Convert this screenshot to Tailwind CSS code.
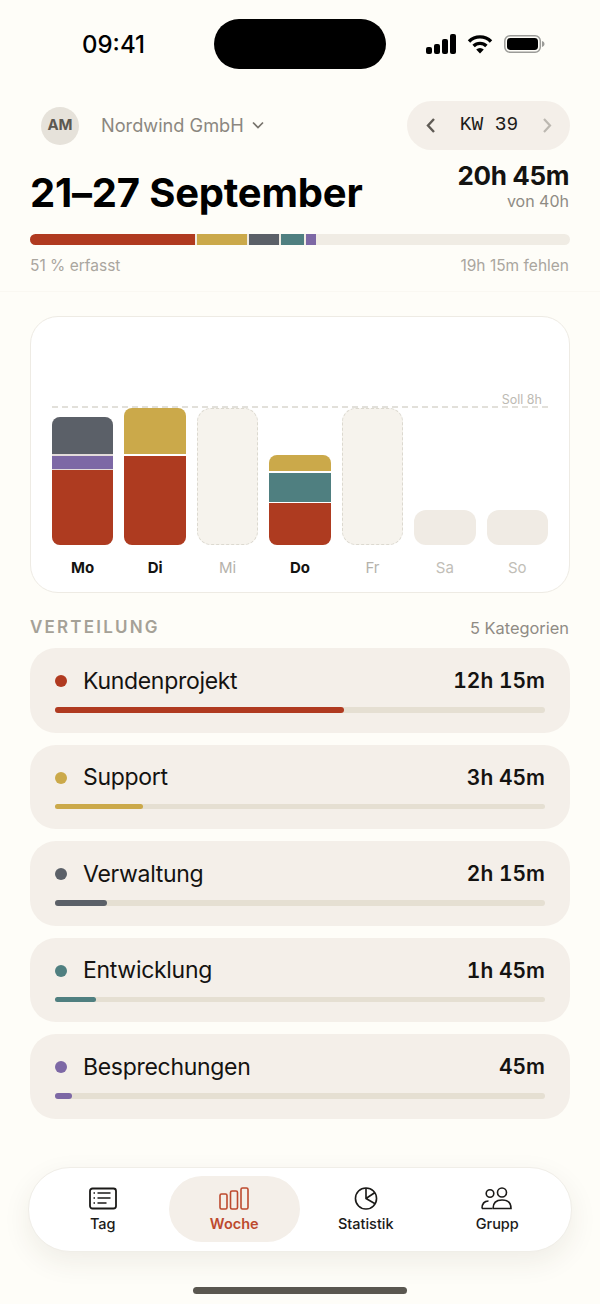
<!DOCTYPE html>
<html lang="de">
<head>
    <meta charset="UTF-8">
    <meta name="viewport" content="width=device-width, initial-scale=1.0">
    <title>Woche</title>
    <script src="https://cdn.jsdelivr.net/npm/@tailwindcss/browser@4"></script>
</head>
<body class="bg-[#fefdf8] font-['Inter',sans-serif] text-[#141311]">
    <div class="w-[600px] h-[1304px] overflow-hidden flex flex-col">
        <!-- Statusleiste -->
        <div class="h-[69px] mt-[19px] pl-[82px] pr-[55px] flex items-start shrink-0">
            <span class="w-[64px] mt-[13px] text-[24px] leading-[25px] font-medium text-black whitespace-nowrap">09:41</span>
            <div class="w-[172px] h-[50px] ml-[68px] rounded-full bg-black"></div>
            <div class="flex items-center gap-[10px] ml-auto mt-[15px]">
                <svg width="31" height="20" viewBox="0 0 31 20" fill="#000"><rect x="0" y="13" width="6" height="7" rx="2"/><rect x="8" y="10" width="6" height="10" rx="2"/><rect x="16" y="5" width="6" height="15" rx="2"/><rect x="24" y="0" width="6" height="20" rx="2"/></svg>
                <svg width="26" height="20" viewBox="0 0 26 20" fill="none" stroke="#000" stroke-width="3.4"><path d="M2 7.5a15.5 15.5 0 0 1 22 0"/><path d="M6.6 12a9 9 0 0 1 12.8 0"/><path d="M13 19.5l-3.8-4a5.3 5.3 0 0 1 7.6 0z" fill="#000" stroke="none"/></svg>
                <svg width="41" height="20" viewBox="0 0 41 20" fill="none" class="ml-[1px]"><rect x="0.8" y="1.8" width="35.5" height="16.5" rx="5.2" stroke="#9b9b98" stroke-width="1.5"/><rect x="3" y="4" width="31" height="12" rx="3.4" fill="#000"/><path d="M38 7v6c1.5-.4 2.5-1.600 2.500-3S39.500 7.400 38 7z" fill="#9b9b98"/></svg>
            </div>
        </div>

        <!-- Kopfbereich -->
        <div class="px-[30px] pt-[13px] h-[204px] border-b border-[#faf8f2] shrink-0">
            <div class="flex items-center justify-between">
                <div class="flex items-center ml-[11px]">
                    <div class="w-[38px] h-[38px] rounded-full bg-[#e6e2da] flex items-center justify-center text-[15px] font-bold text-[#5c5850]">AM</div>
                    <span class="ml-[22px] text-[18.200px] text-[#8b8780]">Nordwind GmbH</span>
                    <svg width="14" height="9" viewBox="0 0 14 9" fill="none" stroke="#77736c" stroke-width="1.700" class="ml-[7px]"><path d="M2 1.500l5 5 5-5"/></svg>
                </div>
                <div class="w-[163px] h-[49px] rounded-full bg-[#f4efe9] flex items-center justify-between pl-[18px] pr-[17px]">
                    <svg width="11" height="17" viewBox="0 0 11 17" fill="none" stroke="#5f5b55" stroke-width="2.400"><path d="M9 2L3 8.500 9 15"/></svg>
                    <span class="font-['Liberation_Mono',monospace] text-[19.500px] text-[#1d1c1a] whitespace-pre">KW 39</span>
                    <svg width="11" height="17" viewBox="0 0 11 17" fill="none" stroke="#bcb8b1" stroke-width="2.200"><path d="M2 2l6 6.500L2 15"/></svg>
                </div>
            </div>
            <div class="flex justify-between mt-[10px] h-[52px] pr-[1px]">
                <h1 class="text-[40px] leading-[46px] mt-[10px] font-bold tracking-[-0.2px] text-black whitespace-nowrap">21–27 September</h1>
                <div class="text-right">
                    <div class="text-[26px] leading-[32px] font-bold tracking-[-0.4px]">20h 45m</div>
                    <div class="text-[16px] leading-[18px] text-[#8f8b84]">von 40h</div>
                </div>
            </div>
            <div class="mt-[22px] h-[11px] rounded-full bg-[#f0ece4] overflow-hidden flex gap-[2px]">
                <div class="w-[165px] bg-[#b03a20]"></div>
                <div class="w-[50px] bg-[#cba94a]"></div>
                <div class="w-[30px] bg-[#5b6068]"></div>
                <div class="w-[23px] bg-[#4f7f80]"></div>
                <div class="w-[10px] bg-[#7d68a5]"></div>
            </div>
            <div class="flex justify-between mt-[12px] pr-[1px] text-[15.500px] leading-[18px] text-[#aaa69f]">
                <span>51 % erfasst</span>
                <span>19h 15m fehlen</span>
            </div>
        </div>

        <!-- Wochendiagramm -->
        <div class="mx-[30px] mt-[24px] h-[277px] rounded-[28px] bg-white border border-[#eeebe4] px-[21px] shrink-0 relative">
            <svg class="absolute left-[21px] top-[89px]" width="496" height="2"><line x1="0" y1="1" x2="496" y2="1" stroke="#d9d6ce" stroke-width="1.500" stroke-dasharray="6 4"/></svg>
            <span class="absolute right-[27px] top-[75px] text-[12.500px] leading-[15px] text-[#bdbab3]">Soll 8h</span>
            <div class="grid grid-cols-7 gap-[11px] h-[228px] items-end">
                <div class="h-[128px] rounded-[8px] overflow-hidden flex flex-col gap-[1.500px] bg-[#e3dcda]">
                    <div class="h-[37px] bg-[#5b6068]"></div>
                    <div class="h-[13px] bg-[#7d68a5]"></div>
                    <div class="flex-1 bg-[#ae3b20]"></div>
                </div>
                <div class="h-[137px] rounded-[8px] overflow-hidden flex flex-col gap-[1.500px] bg-white">
                    <div class="h-[46px] bg-[#cba94a]"></div>
                    <div class="flex-1 bg-[#ae3b20]"></div>
                </div>
                <div class="h-[137px] rounded-[14px] bg-[#f6f3ed] border-[1.500px] border-dashed border-[#dcd9d0]"></div>
                <div class="h-[90px] rounded-[8px] overflow-hidden flex flex-col gap-[1.500px] bg-white">
                    <div class="h-[16px] bg-[#cba94a]"></div>
                    <div class="h-[29px] bg-[#4f7f80]"></div>
                    <div class="flex-1 bg-[#ae3b20]"></div>
                </div>
                <div class="h-[137px] rounded-[14px] bg-[#f6f3ed] border-[1.500px] border-dashed border-[#dcd9d0]"></div>
                <div class="h-[35px] rounded-[12px] bg-[#f0ebe4]"></div>
                <div class="h-[35px] rounded-[12px] bg-[#f0ebe4]"></div>
            </div>
            <div class="grid grid-cols-7 gap-[11px] mt-[14px] text-center text-[15px] leading-[18px]">
                <span class="font-bold">Mo</span>
                <span class="font-bold">Di</span>
                <span class="text-[#b5b2ab]">Mi</span>
                <span class="font-bold">Do</span>
                <span class="text-[#b5b2ab]">Fr</span>
                <span class="text-[#c1beb7]">Sa</span>
                <span class="text-[#c1beb7]">So</span>
            </div>
        </div>

        <!-- Verteilung -->
        <div class="ml-[30px] mr-[31px] mt-[25px] flex justify-between items-center h-[20px] shrink-0">
            <span class="text-[17px] font-semibold tracking-[2.200px] text-[#a5a197]">VERTEILUNG</span>
            <span class="text-[16.400px] text-[#8f8b84]">5 Kategorien</span>
        </div>
        <div class="mx-[30px] mt-[10px] flex flex-col gap-[12px] shrink-0">
            <div class="h-[84.500px] rounded-[26px] bg-[#f4efe9] px-[25px] pt-[17px]">
                <div class="flex items-center h-[32px]">
                    <span class="w-[12px] h-[12px] rounded-full bg-[#b03a20]"></span>
                    <span class="ml-[16px] text-[23px] tracking-[-0.3px] flex-1">Kundenprojekt</span>
                    <span class="text-[21px] font-semibold tabular-nums">12h 15m</span>
                </div>
                <div class="mt-[10px] h-[5.500px] rounded-full bg-[#e5dfd2]"><div class="w-[289px] h-full rounded-full bg-[#b03a20]"></div></div>
            </div>
            <div class="h-[84.500px] rounded-[26px] bg-[#f4efe9] px-[25px] pt-[17px]">
                <div class="flex items-center h-[32px]">
                    <span class="w-[12px] h-[12px] rounded-full bg-[#cba94a]"></span>
                    <span class="ml-[16px] text-[23px] tracking-[-0.3px] flex-1">Support</span>
                    <span class="text-[21px] font-semibold tabular-nums">3h 45m</span>
                </div>
                <div class="mt-[10px] h-[5.500px] rounded-full bg-[#e5dfd2]"><div class="w-[88px] h-full rounded-full bg-[#cba94a]"></div></div>
            </div>
            <div class="h-[84.500px] rounded-[26px] bg-[#f4efe9] px-[25px] pt-[17px]">
                <div class="flex items-center h-[32px]">
                    <span class="w-[12px] h-[12px] rounded-full bg-[#5b6068]"></span>
                    <span class="ml-[16px] text-[23px] tracking-[-0.3px] flex-1">Verwaltung</span>
                    <span class="text-[21px] font-semibold tabular-nums">2h 15m</span>
                </div>
                <div class="mt-[10px] h-[5.500px] rounded-full bg-[#e5dfd2]"><div class="w-[52px] h-full rounded-full bg-[#5b6068]"></div></div>
            </div>
            <div class="h-[84.500px] rounded-[26px] bg-[#f4efe9] px-[25px] pt-[17px]">
                <div class="flex items-center h-[32px]">
                    <span class="w-[12px] h-[12px] rounded-full bg-[#4f7f80]"></span>
                    <span class="ml-[16px] text-[23px] tracking-[-0.3px] flex-1">Entwicklung</span>
                    <span class="text-[21px] font-semibold tabular-nums">1h 45m</span>
                </div>
                <div class="mt-[10px] h-[5.500px] rounded-full bg-[#e5dfd2]"><div class="w-[41px] h-full rounded-full bg-[#4f7f80]"></div></div>
            </div>
            <div class="h-[84.500px] rounded-[26px] bg-[#f4efe9] px-[25px] pt-[17px]">
                <div class="flex items-center h-[32px]">
                    <span class="w-[12px] h-[12px] rounded-full bg-[#7d68a5]"></span>
                    <span class="ml-[16px] text-[23px] tracking-[-0.3px] flex-1">Besprechungen</span>
                    <span class="text-[21px] font-semibold tabular-nums">45m</span>
                </div>
                <div class="mt-[10px] h-[5.500px] rounded-full bg-[#e5dfd2]"><div class="w-[17px] h-full rounded-full bg-[#7d68a5]"></div></div>
            </div>
        </div>

        <!-- Navigation -->
        <div class="mx-[28px] mt-[48px] h-[85px] rounded-[42px] bg-white border border-[#f0eee8] shadow-[0_10px_28px_rgba(60,50,30,0.08)] px-[8px] grid grid-cols-4 items-center shrink-0">
            <div class="h-[66px] flex flex-col items-center justify-center gap-[4px] pt-[3px] text-[#1b1a18]">
                <svg width="28" height="23" viewBox="0 0 28 23" fill="none" stroke="#1b1a18"><rect x="1" y="1.500" width="26" height="20" rx="2.500" stroke-width="1.800"/><path d="M8.500 6h13M8.500 11h13M8.500 16h9M4.500 6h1.500M4.500 11h1.500M4.500 16h1.500" stroke-width="1.500"/></svg>
                <span class="text-[14.500px] leading-[20px] font-medium">Tag</span>
            </div>
            <div class="h-[66px] rounded-[33px] bg-[#f4efe9] flex flex-col items-center justify-center gap-[4px] pt-[3px] text-[#bd4a2e]">
                <svg width="30" height="23" viewBox="0 0 30 23" fill="none" stroke="#bd4a2e" stroke-width="1.600"><rect x="1" y="7" width="7" height="15" rx="1.500"/><rect x="11.500" y="4" width="7" height="18" rx="1.500"/><rect x="22" y="1" width="7" height="21" rx="1.500"/></svg>
                <span class="text-[14.500px] leading-[20px] font-semibold">Woche</span>
            </div>
            <div class="h-[66px] flex flex-col items-center justify-center gap-[4px] pt-[3px] text-[#1b1a18]">
                <svg width="24" height="23" viewBox="0 0 24 24" fill="none" stroke="#1b1a18" stroke-width="1.700"><circle cx="12" cy="12" r="11"/><path d="M12 1v11l9.500 5.500M12 12l9-6"/></svg>
                <span class="text-[14.500px] leading-[20px] font-medium">Statistik</span>
            </div>
            <div class="h-[66px] flex flex-col items-center justify-center gap-[4px] pt-[3px] text-[#1b1a18]">
                <svg width="32" height="23" viewBox="0 0 32 23" fill="none" stroke="#1b1a18" stroke-width="1.600"><circle cx="9" cy="6.500" r="3.800"/><path d="M1 21.500c0-5 2.500-7.500 6.500-7.500M1 21.500h10"/><circle cx="21" cy="5.500" r="4.500"/><path d="M12 21.500c0-5.500 3.500-8.500 9-8.500s9 3 9 8.500z"/></svg>
                <span class="text-[14.500px] leading-[20px] font-medium">Grupp</span>
            </div>
        </div>
        <div class="mx-auto mt-[35px] w-[214px] h-[7px] rounded-full bg-[#5a5750] shrink-0"></div>
    </div>
</body>
</html>
